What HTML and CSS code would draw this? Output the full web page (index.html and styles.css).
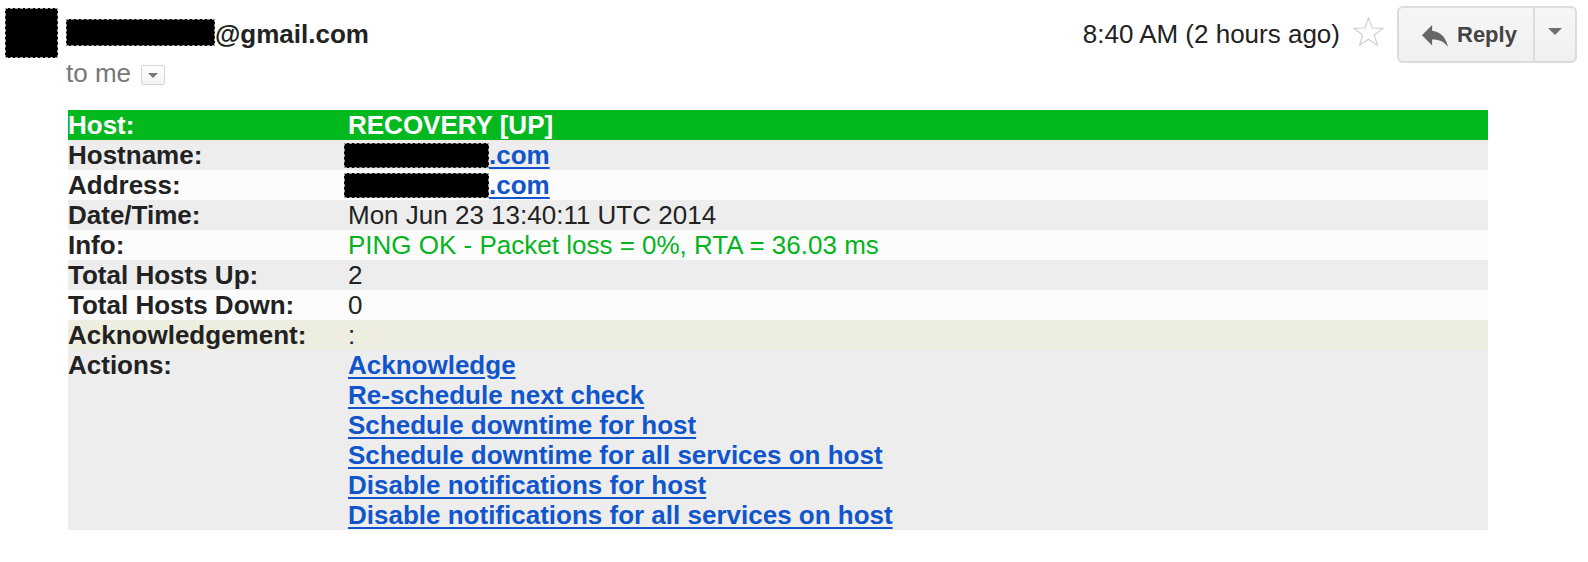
FILE: index.html
```html
<!DOCTYPE html>
<html>
<head>
<meta charset="utf-8">
<title>Nagios notification</title>
<link rel="stylesheet" href="styles.css">
</head>
<body>
<div class="msg">
  <header class="head">
    <div class="avatar"></div>
    <div class="sender">
      <div class="from"><span class="redact name-redact"></span>@gmail.com</div>
      <div class="to"><span>to me</span><span class="to-drop"><span class="tri-small"></span></span></div>
    </div>
    <div class="meta">
      <span class="time">8:40 AM (2 hours ago)</span>
      <svg class="star" width="31" height="30" viewBox="0 0 31 30">
        <polygon points="15.5,1 19.14,10.98 29.77,11.36 21.4,17.92 24.32,28.14 15.5,22.2 6.68,28.14 9.6,17.92 1.23,11.36 11.86,10.98" fill="none" stroke="#cfcfcf" stroke-width="1.2" stroke-linejoin="miter"/>
      </svg>
      <div class="reply-btn">
        <span class="reply-main">
          <svg class="reply-ico" width="26" height="22" viewBox="3 5 18 15" preserveAspectRatio="none">
            <path d="M10 9V5l-7 7 7 7v-4.1c5 0 8.5 1.6 11 5.1-1-5-4-10-11-11z" fill="#666"/>
          </svg>
          <span>Reply</span>
        </span>
        <span class="reply-more"><span class="tri-dark"></span></span>
      </div>
    </div>
  </header>

  <table class="alert">
    <tr class="hdr">
      <td class="lbl">Host:</td>
      <td class="val">RECOVERY [UP]</td>
    </tr>
    <tr class="g">
      <td class="lbl">Hostname:</td>
      <td class="val"><span class="redact cell-redact"></span><a href="#">.com</a></td>
    </tr>
    <tr class="w">
      <td class="lbl">Address:</td>
      <td class="val"><span class="redact cell-redact"></span><a href="#">.com</a></td>
    </tr>
    <tr class="g">
      <td class="lbl">Date/Time:</td>
      <td class="val">Mon Jun 23 13:40:11 UTC 2014</td>
    </tr>
    <tr class="w">
      <td class="lbl">Info:</td>
      <td class="val ok">PING OK - Packet loss = 0%, RTA = 36.03 ms</td>
    </tr>
    <tr class="g">
      <td class="lbl">Total Hosts Up:</td>
      <td class="val">2</td>
    </tr>
    <tr class="w">
      <td class="lbl">Total Hosts Down:</td>
      <td class="val">0</td>
    </tr>
    <tr class="ack">
      <td class="lbl">Acknowledgement:</td>
      <td class="val">:</td>
    </tr>
    <tr class="g">
      <td class="lbl">Actions:</td>
      <td class="val actions">
        <a href="#">Acknowledge</a>
        <a href="#">Re-schedule next check</a>
        <a href="#">Schedule downtime for host</a>
        <a href="#">Schedule downtime for all services on host</a>
        <a href="#">Disable notifications for host</a>
        <a href="#">Disable notifications for all services on host</a>
      </td>
    </tr>
  </table>
</div>
</body>
</html>
```

FILE: styles.css
```css
html, body {
  margin: 0;
  padding: 0;
  background: #ffffff;
}

body {
  font-family: "Liberation Sans", Arial, Helvetica, sans-serif;
  color: #222222;
}

/* ---------- header ---------- */
.head {
  display: flex;
  align-items: flex-start;
  padding: 6px 11px 0 5px;
}

.redact {
  display: inline-block;
  background: #000;
  border: 1px dashed #9a9a9a;
}

.avatar {
  width: 51px;
  height: 48px;
  margin-top: 2px;
  background: #000;
  border: 1px dashed #aaaaaa;
}

.sender {
  margin-left: 8px;
  margin-top: 13px;
}

.from {
  height: 30px;
  font-size: 26px;
  line-height: 30px;
  font-weight: bold;
  color: #222;
  white-space: nowrap;
}

.name-redact {
  width: 147px;
  height: 25px;
  vertical-align: -3px;
}

.to {
  display: flex;
  align-items: center;
  height: 30px;
  margin-top: 9px;
  font-size: 26px;
  line-height: 30px;
  color: #777;
}

.to-drop {
  display: flex;
  align-items: center;
  justify-content: center;
  width: 22px;
  height: 18px;
  margin: 4px 0 0 10px;
  border: 1px solid #d6d6d6;
  border-radius: 2px;
  background: linear-gradient(#ffffff, #f3f3f3);
}

.tri-small {
  width: 0;
  height: 0;
  border-left: 5px solid transparent;
  border-right: 5px solid transparent;
  border-top: 5px solid #777;
}

.meta {
  margin-left: auto;
  display: flex;
  align-items: center;
}

.time {
  font-size: 26px;
  line-height: 30px;
  color: #222;
  white-space: nowrap;
  margin-bottom: 1px;
}

.star {
  display: block;
  margin: 0 13px 5px 13px;
}

.reply-btn {
  display: flex;
  box-sizing: border-box;
  height: 57px;
  border: 2px solid #dcdcdc;
  border-radius: 6px;
  background: linear-gradient(#f6f6f6, #f0f0f0);
}

.reply-main {
  box-sizing: border-box;
  width: 134px;
  display: flex;
  align-items: center;
  gap: 9px;
  padding-left: 23px;
  font-size: 22px;
  font-weight: bold;
  color: #444;
}

.reply-ico {
  display: block;
  margin-top: 2px;
}

.reply-more {
  box-sizing: border-box;
  width: 42px;
  border-left: 2px solid #dcdcdc;
  display: flex;
  align-items: center;
  justify-content: center;
}

.tri-dark {
  width: 0;
  height: 0;
  border-left: 7px solid transparent;
  border-right: 7px solid transparent;
  border-top: 7px solid #6f6f6f;
  margin-bottom: 6px;
}

/* ---------- alert table ---------- */
.alert {
  margin: 22px 0 0 68px;
  width: 1420px;
  border-collapse: collapse;
  border-spacing: 0;
  font-size: 26px;
  line-height: 30px;
}

.alert td {
  padding: 0;
  height: 30px;
  vertical-align: top;
  white-space: nowrap;
}

.alert .lbl {
  width: 280px;
  font-weight: bold;
}

.hdr {
  background: #04b81f;
  color: #ffffff;
}

.hdr .val {
  font-weight: bold;
}

.g {
  background: #ededed;
}

.w {
  background: #fcfcfc;
}

.ack {
  background: #edede0;
}

.ok {
  color: #05b41c;
}

.cell-redact {
  width: 143px;
  height: 23px;
  margin-left: -4px;
  vertical-align: -4px;
}

.alert a {
  color: #1155cc;
  font-weight: bold;
  text-decoration: underline;
  text-decoration-thickness: 2px;
  text-underline-offset: 3px;
}

.actions a {
  display: block;
  width: max-content;
}
```
